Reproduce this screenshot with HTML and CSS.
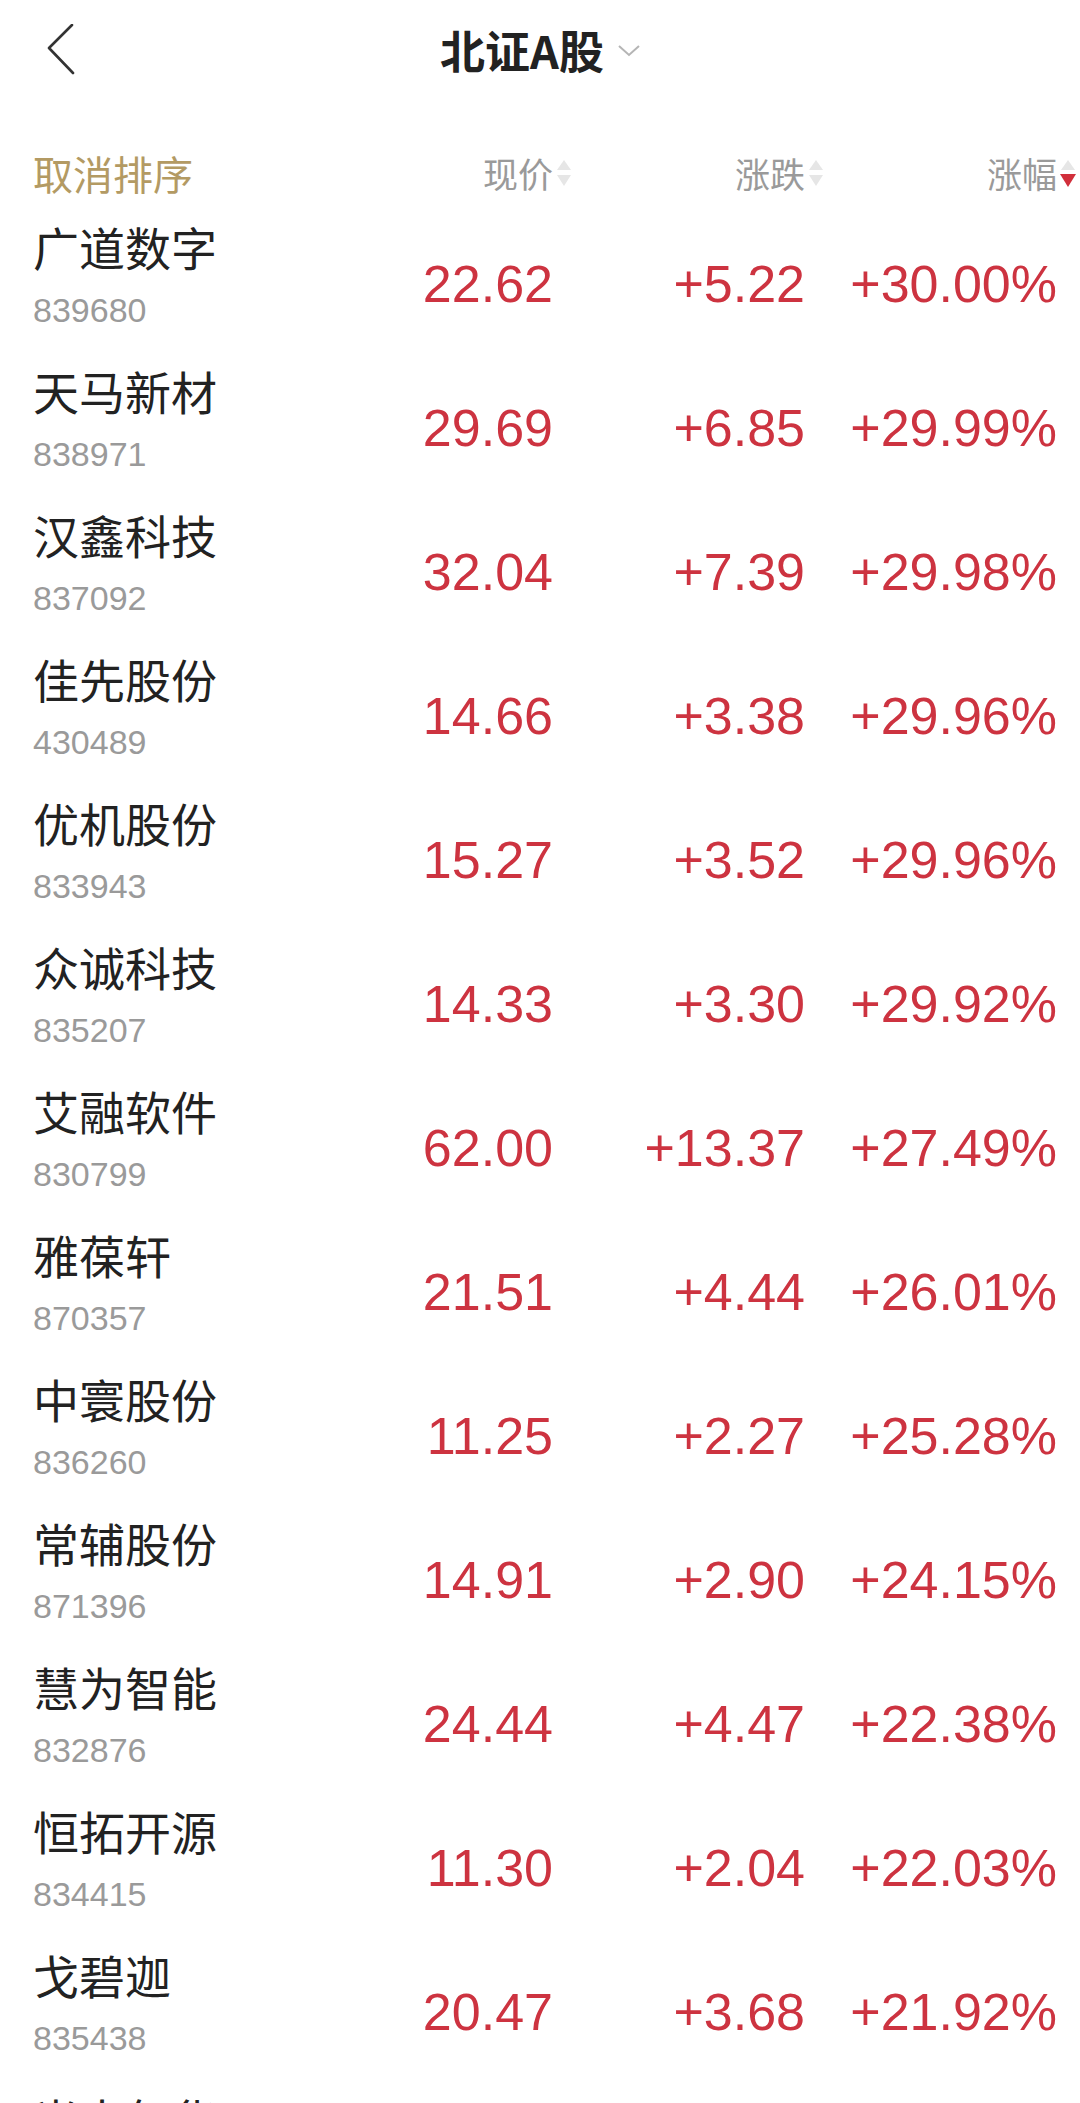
FILE: index.html
```html
<html>
  <head>
    <meta charset="utf-8">
    <link rel="stylesheet" href="styles.css">
  </head>
  <body>
    <div class="topbar">
      <div class="back">
        <svg width="32" height="52" viewBox="0 0 32 52">
          <polyline points="26,1 3,24 27,49" fill="none" stroke="#333" stroke-width="2.6" stroke-linecap="round" stroke-linejoin="round"/>
        </svg>
      </div>
      <div class="title">北证A股<svg class="caret" width="22" height="12" viewBox="0 0 22 12"><polyline points="1,1 11,10 21,1" fill="none" stroke="#b5b5b5" stroke-width="2"/></svg></div>
      <div></div>
    </div>

    <div class="sortbar cols">
      <div class="cancel">取消排序</div>
      <div class="label">现价<svg class="sort" width="18" height="32" viewBox="0 0 18 32"><polygon points="2,13 9,3 16,13" fill="#e6e6e6"/><polygon points="2,18 16,18 9,29" fill="#e6e6e6"/></svg></div>
      <div class="label">涨跌<svg class="sort" width="18" height="32" viewBox="0 0 18 32"><polygon points="2,13 9,3 16,13" fill="#e6e6e6"/><polygon points="2,18 16,18 9,29" fill="#e6e6e6"/></svg></div>
      <div class="label">涨幅<svg class="sort" width="18" height="32" viewBox="0 0 18 32"><polygon points="2,13 9,3 16,13" fill="#e6e6e6"/><polygon points="1,17 17,17 9,30" fill="#d12f3b"/></svg></div>
    </div>

    <ul class="stocks">
      <li class="row cols"><div class="stock"><div class="name">广道数字</div><div class="code">839680</div></div><div class="num">22.62</div><div class="num">+5.22</div><div class="num">+30.00%</div></li>
      <li class="row cols"><div class="stock"><div class="name">天马新材</div><div class="code">838971</div></div><div class="num">29.69</div><div class="num">+6.85</div><div class="num">+29.99%</div></li>
      <li class="row cols"><div class="stock"><div class="name">汉鑫科技</div><div class="code">837092</div></div><div class="num">32.04</div><div class="num">+7.39</div><div class="num">+29.98%</div></li>
      <li class="row cols"><div class="stock"><div class="name">佳先股份</div><div class="code">430489</div></div><div class="num">14.66</div><div class="num">+3.38</div><div class="num">+29.96%</div></li>
      <li class="row cols"><div class="stock"><div class="name">优机股份</div><div class="code">833943</div></div><div class="num">15.27</div><div class="num">+3.52</div><div class="num">+29.96%</div></li>
      <li class="row cols"><div class="stock"><div class="name">众诚科技</div><div class="code">835207</div></div><div class="num">14.33</div><div class="num">+3.30</div><div class="num">+29.92%</div></li>
      <li class="row cols"><div class="stock"><div class="name">艾融软件</div><div class="code">830799</div></div><div class="num">62.00</div><div class="num">+13.37</div><div class="num">+27.49%</div></li>
      <li class="row cols"><div class="stock"><div class="name">雅葆轩</div><div class="code">870357</div></div><div class="num">21.51</div><div class="num">+4.44</div><div class="num">+26.01%</div></li>
      <li class="row cols"><div class="stock"><div class="name">中寰股份</div><div class="code">836260</div></div><div class="num">11.25</div><div class="num">+2.27</div><div class="num">+25.28%</div></li>
      <li class="row cols"><div class="stock"><div class="name">常辅股份</div><div class="code">871396</div></div><div class="num">14.91</div><div class="num">+2.90</div><div class="num">+24.15%</div></li>
      <li class="row cols"><div class="stock"><div class="name">慧为智能</div><div class="code">832876</div></div><div class="num">24.44</div><div class="num">+4.47</div><div class="num">+22.38%</div></li>
      <li class="row cols"><div class="stock"><div class="name">恒拓开源</div><div class="code">834415</div></div><div class="num">11.30</div><div class="num">+2.04</div><div class="num">+22.03%</div></li>
      <li class="row cols"><div class="stock"><div class="name">戈碧迦</div><div class="code">835438</div></div><div class="num">20.47</div><div class="num">+3.68</div><div class="num">+21.92%</div></li>
      <li class="row cols"><div class="stock"><div class="name">光大年华</div></div></li>
    </ul>
  </body>
</html>
```

FILE: styles.css
```css
html, body {
  margin: 0;
  background: #fff;
  overflow: hidden;
}

body {
  font-family: "Noto Sans CJK SC", sans-serif;
  color: #222;
}

/* top bar */
.topbar {
  display: grid;
  grid-template-columns: 1fr auto 1fr;
  align-items: center;
  height: 100px;
}

.back {
  padding-left: 46px;
  height: 52px;
}

.back svg {
  display: block;
}

.title {
  display: flex;
  align-items: center;
  font-size: 45px;
  font-weight: bold;
  line-height: 56px;
  color: #222;
}

.caret {
  margin-left: 14px;
  margin-top: 2px;
}

/* shared column grid */
.cols {
  display: grid;
  grid-template-columns: 1fr 200px 252px 252px;
  padding: 0 23px 0 33px;
}

.sortbar {
  height: 112px;
  box-sizing: border-box;
  padding-top: 52px;
  align-items: start;
}

.cancel {
  font-size: 40px;
  line-height: 42px;
  color: #b39a63;
}

.label {
  display: flex;
  justify-content: flex-end;
  align-items: center;
  font-size: 35px;
  line-height: 42px;
  color: #9a9a9a;
}

.sort {
  margin-left: 2px;
  margin-right: -20px;
}

/* list */
.stocks {
  list-style: none;
  margin: 0;
  padding: 0;
}

.row {
  height: 144px;
  align-items: center;
}

.stock {
  align-self: start;
  padding-top: 6px;
}

.name {
  font-size: 46px;
  line-height: 56px;
  color: #222;
}

.code {
  margin-top: 16px;
  font-family: "Liberation Sans", sans-serif;
  font-size: 34px;
  line-height: 40px;
  color: #9a9a9a;
}

.num {
  text-align: right;
  font-family: "Liberation Sans", sans-serif;
  font-size: 52px;
  line-height: 60px;
  color: #cd3340;
}
```
